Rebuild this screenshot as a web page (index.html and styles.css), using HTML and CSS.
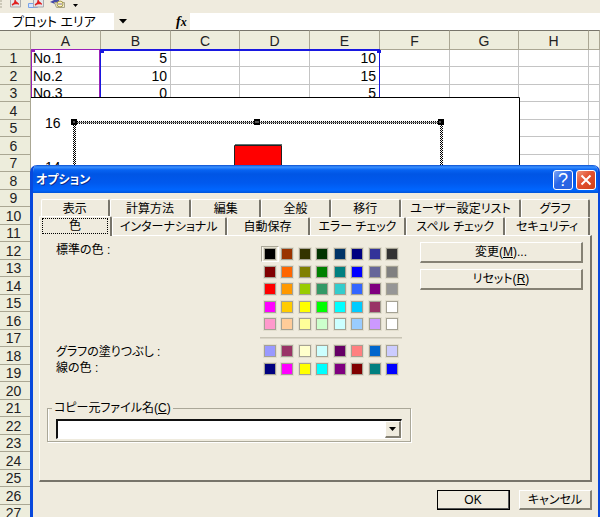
FILE: index.html
```
<!DOCTYPE html>
<html lang="ja">
<head>
<meta charset="utf-8">
<title>オプション</title>
<link rel="stylesheet" href="styles.css">
</head>
<body>
<div class="toolbar">
  <svg class="toolbar-icons" width="90" height="13" viewBox="0 0 90 13" aria-hidden="true">
    <path d="M1 0v8" stroke="#aaa694" stroke-dasharray="2 1"/>
    <path d="M10.500-1h10v8h-10z" fill="#e4e6ea" stroke="#a9aaad"/>
    <path d="M12 5q4-2 3-5M15 1q2 3 4 3M13 4l5-1" fill="none" stroke="#e02020" stroke-width="1.500"/>
    <path d="M28.500 3.500h9v4h-9z" fill="#d5e5ff" stroke="#78a2e8"/>
    <path d="M33.500-1h10v8h-10z" fill="#e4e6ea" stroke="#a9aaad"/>
    <path d="M35 5q4-2 3-5M38 1q2 3 4 3M36 4l5-1" fill="none" stroke="#e02020" stroke-width="1.500"/>
    <path d="M50 2l4-2h5v4h-4z" fill="#454aa8"/>
    <path d="M54.500 2.500h10v5h-8z" fill="#f3eed0" stroke="#aaa58a"/>
    <circle cx="60" cy="4" r="3" fill="#fff5b8" stroke="#a49a50"/>
    <path d="M58 4h4" stroke="#7f70b0"/>
    <path d="M73 4h5l-2.500 3z" fill="#000"/>
  </svg>
</div>
<div class="formula-bar">
  <input class="name-box" aria-label="名前ボックス" value="プロット エリア">
  <button class="name-arrow" aria-label="名前の一覧"><svg width="8" height="5" viewBox="0 0 8 5"><path d="M0 0h8L4 4.500z"/></svg></button>
  <button class="fx"><i>f</i><small>x</small></button>
  <input class="formula" aria-label="数式">
</div>
<main class="sheet">
  <table class="grid">
    <colgroup><col class="col-head"><col class="col"><col class="col"><col class="col-narrow"><col class="col"><col class="col"><col class="col"><col class="col-narrow"><col class="col"><col></colgroup>
    <thead><tr><th></th><th>A</th><th>B</th><th>C</th><th>D</th><th>E</th><th>F</th><th>G</th><th>H</th><th></th></tr></thead>
    <tbody>
      <tr><th>1</th><td class="name">No.1</td><td>5</td><td></td><td></td><td>10</td><td></td><td></td><td></td><td></td></tr>
      <tr><th>2</th><td class="name">No.2</td><td>10</td><td></td><td></td><td>15</td><td></td><td></td><td></td><td></td></tr>
      <tr><th>3</th><td class="name">No.3</td><td>0</td><td></td><td></td><td>5</td><td></td><td></td><td></td><td></td></tr>
      <tr><th>4</th><td></td><td></td><td></td><td></td><td></td><td></td><td></td><td></td><td></td></tr>
      <tr><th>5</th><td></td><td></td><td></td><td></td><td></td><td></td><td></td><td></td><td></td></tr>
      <tr><th>6</th><td></td><td></td><td></td><td></td><td></td><td></td><td></td><td></td><td></td></tr>
      <tr><th>7</th><td></td><td></td><td></td><td></td><td></td><td></td><td></td><td></td><td></td></tr>
      <tr><th>8</th></tr><tr><th>9</th></tr><tr><th>10</th></tr><tr><th>11</th></tr><tr><th>12</th></tr>
      <tr><th>13</th></tr><tr><th>14</th></tr><tr><th>15</th></tr><tr><th>16</th></tr><tr><th>17</th></tr>
      <tr><th>18</th></tr><tr><th>19</th></tr><tr><th>20</th></tr><tr><th>21</th></tr><tr><th>22</th></tr>
      <tr><th>23</th></tr><tr><th>24</th></tr><tr><th>25</th></tr><tr><th>26</th></tr><tr><th>27</th></tr>
    </tbody>
  </table>
  <div class="range range-names"></div>
  <div class="range range-values"></div>
  <svg class="chart" width="489" height="90" viewBox="0 0 489 90" role="img" aria-label="グラフ">
    <defs><pattern id="dither" width="2" height="2" patternUnits="userSpaceOnUse"><path d="M0 0h1v1h-1zM1 1h1v1h-1z"/></pattern></defs>
    <path d="M0 0h489v90H0z" fill="#fff"/>
    <path d="M0 .5h488.500V90" fill="none" stroke="#000"/>
    <text x="14" y="31">16</text>
    <text x="14" y="75">14</text>
    <path d="M42 24h370v66h-3V27H45v63h-3z" fill="url(#dither)"/>
    <path d="M44 25.500h366" stroke="#777"/>
    <path d="M40 22h6v6h-6zM223 22h6v6h-6zM407 22h6v6h-6z"/>
    <path d="M42 25h2M224 25h4M408 25h2" stroke="#aaa"/>
    <path d="M203.500 48.500h47V90h-47z" fill="#f00" stroke="#222"/>
    <path d="M204 47.500h47" stroke="#5c7474"/>
  </svg>
</main>

<section class="dialog" role="dialog" aria-labelledby="dialog-title">
  <header class="titlebar">
    <h1 id="dialog-title">オプション</h1>
    <button class="caption help" aria-label="ヘルプ">?</button>
    <button class="caption close" aria-label="閉じる"><svg width="12" height="12" viewBox="0 0 12 12"><path d="M1.500 1.500l9 9M10.500 1.500l-9 9" stroke="#fff" stroke-width="2"/></svg></button>
  </header>
  <div class="dialog-body">
    <div class="tabs tabs-back" role="tablist">
      <button role="tab">表示</button><button role="tab">計算方法</button><button role="tab">編集</button><button role="tab">全般</button><button role="tab">移行</button><button role="tab">ユーザー設定リスト</button><button role="tab">グラフ</button>
    </div>
    <div class="tabs tabs-front" role="tablist">
      <button role="tab" class="selected" aria-selected="true"><span>色</span></button><button role="tab">インターナショナル</button><button role="tab">自動保存</button><button role="tab">エラー チェック</button><button role="tab">スペル チェック</button><button role="tab">セキュリティ</button>
    </div>
    <div class="panel" role="tabpanel">
      <div class="colors">
        <div class="labels">
          <p class="label-standard">標準の色 :</p>
          <p>グラフの塗りつぶし :</p>
          <p>線の色 :</p>
        </div>
        <div class="palettes">
          <div class="palette" id="standard"></div>
          <hr>
          <div class="palette" id="chart-colors"></div>
        </div>
        <div class="actions">
          <button class="button">変更(<u>M</u>)...</button>
          <button class="button">リセット(<u>R</u>)</button>
        </div>
      </div>
      <fieldset class="source">
        <legend><label for="source-file">コピー元ファイル名(<u>C</u>)</label></legend>
        <div class="combo">
          <select id="source-file"><option></option></select>
          <span class="combo-arrow" aria-hidden="true"><svg width="7" height="4" viewBox="0 0 7 4"><path d="M0 0h7L3.500 4z"/></svg></span>
        </div>
      </fieldset>
    </div>
    <footer class="dialog-buttons">
      <button class="button default">OK</button>
      <button class="button">キャンセル</button>
    </footer>
  </div>
</section>
<script src="palette.js"></script>
</body>
</html>
```

FILE: styles.css
```
* { box-sizing: border-box; }

body {
  margin: 0;
  height: 100vh;
  overflow: hidden;
  position: relative;
  background: #fff;
  color: #000;
  font: 12px/16px "Liberation Sans", "Noto Sans CJK JP", sans-serif;
}

button, input, select {
  font: inherit;
  color: inherit;
  margin: 0;
  padding: 0;
  border: 0;
  border-radius: 0;
}

.toolbar { height: 13px; background: #efebde; }
.toolbar-icons { display: block; }

.formula-bar {
  display: flex;
  align-items: stretch;
  height: 17px;
  background: #efebde;
}
.name-box {
  width: 114px;
  padding-left: 12px;
  background: #fff;
  font-size: 13px;
  font-feature-settings: "palt";
}
.name-arrow { width: 18px; background: none; display: grid; place-items: center; }
.fx {
  width: 58px;
  padding-left: 44px;
  background: none;
  text-align: left;
  font: bold 14px/16px "Liberation Serif", serif;
}
.fx small { font-size: 12px; font-style: italic; }
.formula { flex: 1; min-width: 0; background: #fff; }

/* Worksheet */
.sheet { position: relative; }
.grid {
  width: 100%;
  table-layout: fixed;
  border-collapse: separate;
  border-spacing: 0;
  font-size: 14px;
  line-height: 16px;
}
.col-head { width: 31px; }
.col { width: 70px; }
.col-narrow { width: 69px; }
.grid th, .grid td {
  padding: 0;
  border-right: 1px solid #c4c4c4;
  border-bottom: 1px solid #c4c4c4;
  font-weight: normal;
}
.grid td { text-align: right; padding-right: 3px; }
.grid .name { text-align: left; padding-left: 2px; }
.grid th { background: #ededdc; border-color: #aaa793; color: #222; }
.grid tbody th { padding-right: 3px; }
.grid thead th { height: 20px; border-top: 1px solid #77756a; padding-top: 2px; }
.grid tbody tr { height: 18px; }
.grid tbody tr:nth-child(odd) { height: 17px; }

.range { position: absolute; top: 19px; height: 60px; border: 1px solid; }
.range-names { left: 31px; width: 69px; border-color: #9a20b8; color: #9a20b8; }
.range-values { left: 100px; width: 280px; border-width: 2px 1px; color: #1818e0; }
.range-names::before, .range-values::before, .range-values::after {
  content: "";
  position: absolute;
  top: -1px;
  left: -1px;
  width: 4px;
  height: 3px;
  background: currentColor;
}
.range-values::after { left: auto; right: -2px; }

.chart { position: absolute; left: 31px; top: 67px; font-size: 14px; }

/* Options window */
.dialog {
  position: absolute;
  left: 30px;
  right: 0;
  top: 165px;
  bottom: 0;
  overflow: hidden;
  border: solid #0848dc;
  border-width: 0 2px 0 3px;
  border-radius: 7px 7px 0 0;
  background: #efebde;
  font-feature-settings: "palt";
}
.titlebar {
  display: flex;
  align-items: center;
  gap: 3px;
  height: 28px;
  margin: 0 -2px 0 -3px;
  padding: 2px 4px 0 6px;
  background: linear-gradient(#0a4ed0 0, #3b91ff 2px, #0763f2 5px, #0055e5 9px, #0059ee 18px, #0066ff 25px, #0054d8 28px);
}
.titlebar h1 {
  flex: 1;
  margin: 0;
  color: #fff;
  font-size: 12px;
  line-height: 16px;
  text-shadow: 1px 1px #0a2c8c;
}
.caption {
  display: grid;
  place-items: center;
  width: 20px;
  height: 20px;
  border: 1px solid #fff;
  border-radius: 3px;
  color: #fff;
  font-size: 18px;
  line-height: 18px;
}
.help { background: linear-gradient(135deg, #7ba5f6, #2866e8 45%, #2d62dc); }
.close { background: linear-gradient(135deg, #f0957a, #e25030 45%, #cf4015); }

.dialog-body { padding: 6px 6px 0; }
.tabs { display: grid; margin: 0 2px; }
.tabs-back { grid-template-columns: 69fr 82fr 70fr 70fr 70fr 121fr 69fr; }
.tabs-front { grid-template-columns: 71fr 115fr 83fr 97fr 99fr 85fr; }
.tabs button {
  height: 18px;
  min-width: 0;
  padding: 0;
  background: none;
  border: 1px solid #fff;
  border-right: 2px solid #77746a;
  border-bottom: 0;
  border-radius: 2px 2px 0 0;
  font-size: 12px;
  line-height: 16px;
  white-space: nowrap;
}
.tabs .selected {
  position: relative;
  z-index: 1;
  height: 20px;
  margin: -1px 0 -1px -2px;
  padding: 1px 2px 2px;
  background: #efebde;
}
.selected span { display: block; border: 1px dotted #000; line-height: 14px; }

.panel {
  border: 1px solid #fff;
  border-right: 2px solid #77746a;
  border-bottom: 2px solid #77746a;
  padding: 6px 7px 38px;
}
.colors { display: grid; grid-template-columns: 214px 159px 1fr; }
.labels { padding-left: 9px; }
.labels p { margin: 0; }
.labels .label-standard { margin-bottom: 86px; }
.palettes { padding-top: 4px; }
.palette {
  display: grid;
  grid-template-columns: repeat(8, 1fr);
  width: 140px;
}
.palettes hr {
  width: 142px;
  height: 2px;
  margin: 3px 0 4px -1px;
  border: 0;
  border-top: 1px solid #c8c4b4;
  border-bottom: 1px solid #dad6c8;
}
.swatch {
  height: 16px;
  margin-bottom: 1px;
  display: grid;
  place-items: center;
  background: none;
}
.swatch:nth-child(16n + 1) { margin-bottom: 2px; }
.swatch i {
  width: 12px;
  height: 12px;
  border: 1px solid #a5a294;
  outline: 1px solid #e2dece;
}
.swatch.current { background: #f8f6ef; border: 1px solid #fff; border-top-color: #aaa798; border-left-color: #aaa798; }

.actions { display: grid; gap: 6px; align-content: start; }
.button {
  height: 21px;
  background: #efebde;
  border: 1px solid #fff;
  border-right: 2px solid #858174;
  border-bottom: 2px solid #858174;
  font-size: 12px;
  line-height: 16px;
}

.source {
  width: 364px;
  margin: 22px 0 0;
  padding: 3px 8px 2px;
  border: 1px solid #aaa798;
  box-shadow: 1px 1px #fff, inset 1px 0 #fff;
}
.source legend { margin-left: -4px; padding: 0 2px; }
.combo {
  display: flex;
  height: 20px;
  border: 2px solid #111;
  border-right: 1px solid #fff;
  border-bottom: 1px solid #fff;
  background: #fff;
}
.combo select { flex: 1; min-width: 0; appearance: none; background: #fff; }
.combo-arrow {
  display: grid;
  place-items: center;
  width: 16px;
  background: #efebde;
  border: 1px solid #fff;
  border-right: 2px solid #858174;
  border-bottom: 2px solid #858174;
}

.dialog-buttons { display: flex; justify-content: flex-end; gap: 9px; margin-top: 8px; }
.dialog-buttons .button { width: 73px; height: 20px; }
.dialog-buttons .default { outline: 1px solid #000; outline-offset: -1px; border-color: #000 #555 #555 #000; }
```

FILE: palette.js
```
const palettes = {
  standard: [
    "#000000", "#993300", "#333300", "#003300", "#003366", "#000080", "#333399", "#333333",
    "#800000", "#ff6600", "#808000", "#008000", "#008080", "#0000ff", "#666699", "#808080",
    "#ff0000", "#ff9900", "#99cc00", "#339966", "#33cccc", "#3366ff", "#800080", "#969696",
    "#ff00ff", "#ffcc00", "#ffff00", "#00ff00", "#00ffff", "#00ccff", "#993366", "#ffffff",
    "#ff99cc", "#ffcc99", "#ffff99", "#ccffcc", "#ccffff", "#99ccff", "#cc99ff", "#ffffff"
  ],
  "chart-colors": [
    "#9999ff", "#993366", "#ffffcc", "#ccffff", "#660066", "#ff8080", "#0066cc", "#ccccff",
    "#000080", "#ff00ff", "#ffff00", "#00ffff", "#800080", "#800000", "#008080", "#0000ff"
  ]
};

for (const [id, colors] of Object.entries(palettes)) {
  const palette = document.getElementById(id);
  colors.forEach((color, index) => {
    const swatch = document.createElement("button");
    swatch.className = id === "standard" && index === 0 ? "swatch current" : "swatch";
    swatch.setAttribute("aria-label", color);
    const chip = document.createElement("i");
    chip.style.background = color;
    swatch.append(chip);
    palette.append(swatch);
  });
}
```
